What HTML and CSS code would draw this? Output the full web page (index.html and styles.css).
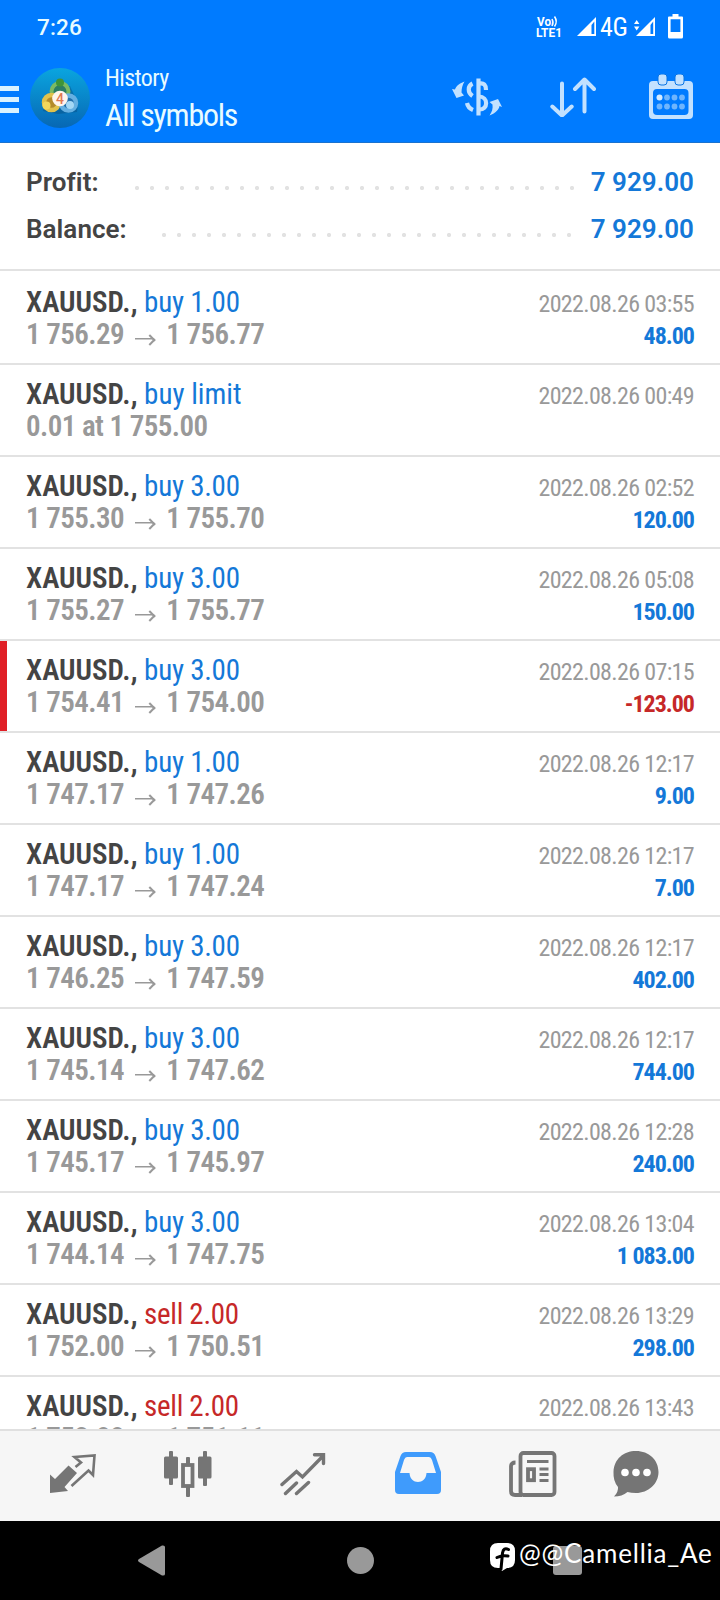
FILE: index.html
```html
<!DOCTYPE html>
<html lang="en">
<head>
<meta charset="utf-8">
<title>History</title>
<link rel="stylesheet" href="styles.css">
</head>
<body>
<div class="screen">
  <header class="top">
    <div class="status">
      <span class="time">7:26</span>
      <div class="status-icons">
        <svg class="volte" width="28" height="26" viewBox="0 0 28 26">
          <text x="1" y="11" textLength="14" lengthAdjust="spacingAndGlyphs" class="vo-text">Vo</text>
          <path d="M16 4q2 3.500 0 7M18.500 1.500q3.500 5 0 10" fill="none" stroke="#fff" stroke-width="1.500"/>
          <text x="0" y="22" textLength="26" lengthAdjust="spacingAndGlyphs" class="vo-text">LTE1</text>
        </svg>
        <svg class="sig1" width="20" height="20" viewBox="0 0 20 20"><path d="M0 19 19 0V19z" fill="#fff"/><path d="M14.500 8 17.300 4.500V17H14.500z" fill="#007bff"/></svg>
        <span class="net">4G</span>
        <svg class="sig2" width="22" height="20" viewBox="0 0 22 20"><path d="M0 7 2.700 3 5.400 7zM0 9.500 2.700 13.500 5.400 9.500zM2 19 21 0V19z" fill="#fff"/><path d="M16.500 8 19.200 4.500V17H16.500z" fill="#007bff"/></svg>
        <svg class="batt" width="15" height="25" viewBox="0 0 15 25"><path d="M4.500 0h6v2.500H14a1 1 0 0 1 1 1V23a1.500 1.500 0 0 1-1.500 1.500h-12A1.500 1.500 0 0 1 0 23V3.500a1 1 0 0 1 1-1h3.500zM2.600 5.200V18h9.800V5.200z" fill="#fff" fill-rule="evenodd"/></svg>
      </div>
    </div>
    <div class="appbar">
      <div class="menu"><i></i><i></i><i></i></div>
      <svg class="logo" width="60" height="60" viewBox="0 0 60 60">
        <defs>
          <linearGradient id="lg" x1="0" y1="0" x2="0" y2="1"><stop offset="0" stop-color="#0aa5df"/><stop offset="1" stop-color="#0767b4"/></linearGradient>
          <linearGradient id="gr" x1="0" y1="0" x2="0" y2="1"><stop offset="0" stop-color="#6db54c"/><stop offset="1" stop-color="#a5cf92"/></linearGradient>
        </defs>
        <circle cx="30" cy="30" r="30" fill="url(#lg)"/>
        <path d="M13 43 28 46 47 44 48 36 40 18 22 18z" fill="#07406c" opacity=".35"/>
        <circle cx="30" cy="23.500" r="8.500" fill="#2d7e62" stroke="#7cba62" stroke-width="4"/>
        <circle cx="21.500" cy="34.500" r="7.500" fill="#b48b2a" stroke="#e1c24b" stroke-width="4.500"/>
        <circle cx="38.500" cy="35" r="7.500" fill="#2370ac" stroke="#65b0e2" stroke-width="4.500"/>
        <circle cx="30" cy="14.500" r="4" fill="#3f9438"/><circle cx="16.500" cy="37.500" r="4" fill="#f2d75c"/><circle cx="40" cy="37" r="4" fill="#a5d8f5"/>
        <circle cx="30" cy="30.500" r="7.800" fill="#fff5ec"/>
        <text x="30" y="35.500" text-anchor="middle" class="logo-num">4</text>
      </svg>
      <div class="titles"><span class="t1">History</span><span class="t2">All symbols</span></div>
      <div class="actions">
        <svg class="act-currency" width="50" height="40" viewBox="0 0 50 40" fill="none" stroke="#c2e1ff" stroke-width="4.200">
          <path d="M26.500 1.500V38.500"/>
          <path d="M27 6.500C32 5.500 34 8 34 13M27 19.500C36.500 19.500 36.500 33 27 32.500M20.500 6.500C15.500 9 15.500 15.500 20.500 19M15 26Q16 31 21 33"/>
          <path d="M12.500 4.500C8 6 4 9 3 12.500L0 12 4.500 21 12 18.500 9.500 15.500C9.500 11 10.500 8 12.500 4.500zM37.500 38.500C44 36 47 32 47.500 29L50 30 46 22 37.500 25 40.500 27.500C41 31.500 40 35 37.500 38.500z" fill="#c2e1ff" stroke="none"/>
        </svg>
        <svg class="act-sort" width="46" height="40" viewBox="0 0 46 40" fill="none" stroke="#c2e1ff" stroke-width="4" stroke-linecap="round" stroke-linejoin="round"><path d="M12 6.500V37.500M2.300 29.500 12 38.500 21.700 29.500M34.500 34.500V3M25 12 34.500 2.500 44 12"/></svg>
        <svg width="44" height="46" viewBox="0 0 44 46">
          <path d="M4 7H40a4 4 0 0 1 4 4V41a4 4 0 0 1-4 4H4a4 4 0 0 1-4-4V11a4 4 0 0 1 4-4zM8 15a4 4 0 0 0-4 4V37a4 4 0 0 0 4 4H35.500a4 4 0 0 0 4-4V19a4 4 0 0 0-4-4z" fill="#c2e1ff" fill-rule="evenodd"/>
          <rect x="9" y="0" width="9" height="11" rx="3" fill="#c2e1ff" stroke="#0874e4"/><rect x="26" y="0" width="9" height="11" rx="3" fill="#c2e1ff" stroke="#0874e4"/>
          <g fill="#6fb5fd"><circle cx="10.500" cy="23.500" r="3" fill="#d5ebff"/><circle cx="18" cy="23.500" r="2.900"/><circle cx="25.500" cy="23.500" r="2.900"/><circle cx="33" cy="23.500" r="2.900"/><circle cx="10.500" cy="32.500" r="2.900"/><circle cx="18" cy="32.500" r="2.900"/><circle cx="25.500" cy="32.500" r="2.900"/><circle cx="33" cy="32.500" r="2.900"/></g>
        </svg>
      </div>
    </div>
  </header>

  <section class="summary">
    <div class="sum"><span class="label">Profit:</span><span class="dots dots-profit"></span><span class="value">7 929.00</span></div>
    <div class="sum"><span class="label">Balance:</span><span class="dots dots-balance"></span><span class="value">7 929.00</span></div>
  </section>

  <main class="list">
    <article class="row first"><div class="l"><p><b>XAUUSD.,</b> <em>buy 1.00</em></p><p class="px">1 756.29 <i class="arr"></i> 1 756.77</p></div><div class="r"><p>2022.08.26 03:55</p><p class="pl">48.00</p></div></article>
    <article class="row"><div class="l"><p><b>XAUUSD.,</b> <em class="limit">buy limit</em></p><p class="px">0.01 at 1 755.00</p></div><div class="r"><p>2022.08.26 00:49</p></div></article>
    <article class="row"><div class="l"><p><b>XAUUSD.,</b> <em>buy 3.00</em></p><p class="px">1 755.30 <i class="arr"></i> 1 755.70</p></div><div class="r"><p>2022.08.26 02:52</p><p class="pl">120.00</p></div></article>
    <article class="row"><div class="l"><p><b>XAUUSD.,</b> <em>buy 3.00</em></p><p class="px">1 755.27 <i class="arr"></i> 1 755.77</p></div><div class="r"><p>2022.08.26 05:08</p><p class="pl">150.00</p></div></article>
    <article class="row stopped"><div class="l"><p><b>XAUUSD.,</b> <em>buy 3.00</em></p><p class="px">1 754.41 <i class="arr"></i> 1 754.00</p></div><div class="r"><p>2022.08.26 07:15</p><p class="pl loss">-123.00</p></div></article>
    <article class="row"><div class="l"><p><b>XAUUSD.,</b> <em>buy 1.00</em></p><p class="px">1 747.17 <i class="arr"></i> 1 747.26</p></div><div class="r"><p>2022.08.26 12:17</p><p class="pl">9.00</p></div></article>
    <article class="row"><div class="l"><p><b>XAUUSD.,</b> <em>buy 1.00</em></p><p class="px">1 747.17 <i class="arr"></i> 1 747.24</p></div><div class="r"><p>2022.08.26 12:17</p><p class="pl">7.00</p></div></article>
    <article class="row"><div class="l"><p><b>XAUUSD.,</b> <em>buy 3.00</em></p><p class="px">1 746.25 <i class="arr"></i> 1 747.59</p></div><div class="r"><p>2022.08.26 12:17</p><p class="pl">402.00</p></div></article>
    <article class="row"><div class="l"><p><b>XAUUSD.,</b> <em>buy 3.00</em></p><p class="px">1 745.14 <i class="arr"></i> 1 747.62</p></div><div class="r"><p>2022.08.26 12:17</p><p class="pl">744.00</p></div></article>
    <article class="row"><div class="l"><p><b>XAUUSD.,</b> <em>buy 3.00</em></p><p class="px">1 745.17 <i class="arr"></i> 1 745.97</p></div><div class="r"><p>2022.08.26 12:28</p><p class="pl">240.00</p></div></article>
    <article class="row"><div class="l"><p><b>XAUUSD.,</b> <em>buy 3.00</em></p><p class="px">1 744.14 <i class="arr"></i> 1 747.75</p></div><div class="r"><p>2022.08.26 13:04</p><p class="pl">1 083.00</p></div></article>
    <article class="row"><div class="l"><p><b>XAUUSD.,</b> <em class="sell">sell 2.00</em></p><p class="px">1 752.00 <i class="arr"></i> 1 750.51</p></div><div class="r"><p>2022.08.26 13:29</p><p class="pl">298.00</p></div></article>
    <article class="row"><div class="l"><p><b>XAUUSD.,</b> <em class="sell">sell 2.00</em></p><p class="px">1 752.88 <i class="arr"></i> 1 751.11</p></div><div class="r"><p>2022.08.26 13:43</p></div></article>
  </main>

  <nav class="tabs">
    <svg width="46" height="40" viewBox="0 0 46 40"><path d="M18.500 11.500 27 19 14.500 33 18 37 0 39V20.500L5 25z" fill="#757575"/><path d="M25.500 13 31 8.500 24.500 3 44.500 1.500 43 21 38.500 16.500 21.500 32" fill="none" stroke="#757575" stroke-width="2.600"/></svg>
    <svg width="48" height="46" viewBox="0 0 48 46" fill="#757575"><rect x="5" y="0" width="4" height="34" rx="1"/><rect x="0" y="5.500" width="14" height="22" rx="1.500"/><rect x="39" y="0" width="4" height="35" rx="1"/><rect x="34" y="5.500" width="13.500" height="22" rx="1.500"/><rect x="22" y="6" width="4" height="40" rx="1"/><rect x="19" y="14" width="9.500" height="21" fill="#f6f6f6" stroke="#757575" stroke-width="3.800"/></svg>
    <svg width="46" height="44" viewBox="0 0 46 44" fill="none" stroke="#757575" stroke-width="3.400" stroke-linecap="round"><path d="M2 32.500 16.500 19.500 22.500 25 43 4M34.500 2.800H43.500V11.500M5.500 41.500 16.500 31M16.500 41.500 28.500 30.500"/></svg>
    <svg width="46" height="44" viewBox="0 0 46 44"><path d="M11 0H35q4 0 5.500 4L46 20V38a4 4 0 0 1-4 4H4a4 4 0 0 1-4-4V20L5.500 4Q7 0 11 0zM12 5Q10 5 9 8L5 21H14.500C15 33 31 33 31.500 21H41L37 8Q36 5 34 5z" fill="#3f9bfc" fill-rule="evenodd"/></svg>
    <svg width="48" height="46" viewBox="0 0 48 46" fill="none" stroke="#757575" stroke-width="3.800"><path d="M6.500 11.500Q2 11.500 2 15V40q0 4 4 4H13"/><rect x="11.500" y="2" width="34" height="42" rx="3"/><path d="M18 10.500H39.500M30.500 18H39.500M30.500 23.500H39.500M30.500 29.500H39.500" stroke-width="3.200"/><rect x="19" y="18.200" width="6" height="11"/></svg>
    <svg width="46" height="46" viewBox="0 0 46 46"><path d="M23 0C36 0 45.500 9 45.500 21S35 42 23 42Q18 42 14.500 41 9 45.500 1 45.500 5.500 41 5 36 0 30 .5 21C1 8 10.500 0 23 0z" fill="#757575"/><g fill="#fff"><circle cx="12" cy="21.500" r="3.800"/><circle cx="23" cy="21.500" r="3.800"/><circle cx="34" cy="21.500" r="3.800"/></g></svg>
  </nav>

  <footer class="sys">
    <svg class="back" width="27" height="31" viewBox="0 0 27 31"><path d="M1 14 24 .5Q27 0 27 2V29Q27 31 24 30.500L1 17Q-1 15.500 1 14z" fill="#999"/></svg>
    <i class="home"></i>
    <i class="recent"></i>
    <div class="mark">
      <svg width="25" height="28" viewBox="0 0 25 28"><path d="M8 0H17Q25 0 25 8V17Q25 25 17 25L12 28 10 25H8Q0 25 0 17V8Q0 0 8 0z" fill="#fff"/><path d="M18.500 6.500Q13.500 4 12.500 10L11 26M7 14.500Q12 12 18 13" fill="none" stroke="#000" stroke-width="3" stroke-linecap="round"/></svg>
      <span>@@Camellia_Ae</span>
    </div>
  </footer>
</div>
</body>
</html>
```
FILE: styles.css
```css
* { box-sizing: border-box; }
body { margin: 0; background: #fff; font-family: Roboto, "Liberation Sans", sans-serif; }
p { margin: 0; }
.screen { width: 720px; height: 1600px; display: flex; flex-direction: column; overflow: hidden; }

.top { height: 143px; background: #007bff; border-bottom: 1px solid #1a72cf; color: #e8fbff; flex: none; }
.status { height: 56px; display: flex; justify-content: space-between; padding: 0 37px; }
.time { font-size: 22.500px; font-weight: 500; line-height: 54px; letter-spacing: .2px; }
.status-icons { display: flex; align-items: flex-start; color: #fff; }
.volte { margin: 15px 13px 0 0; }
.vo-text { font: 700 12px Roboto, sans-serif; fill: #fff; }
.sig1 { margin-top: 17px; }
.net { width: 27px; font-size: 26px; line-height: 54px; font-stretch: 75%; font-weight: 450; letter-spacing: -.3px; margin: 0 7px 0 3px; }
.sig2 { margin-top: 17px; }
.batt { margin: 14px 0 0 12px; }

.appbar { height: 86px; display: flex; padding-right: 27px; }
.menu { width: 19px; display: flex; flex-direction: column; gap: 6px; padding-top: 30px; }
.menu i { height: 5px; background: #d9f2ff; flex: none; }
.logo { margin: 12px 0 0 11px; }
.logo-num { font: 500 14px Roboto, sans-serif; fill: #e07a52; }
.titles { flex: 1; display: flex; flex-direction: column; align-items: flex-start; padding: 7px 0 0 15px; font-stretch: 75%; font-weight: 450; white-space: nowrap; }
.t1 { font-size: 24px; line-height: 30px; letter-spacing: -.6px; }
.t2 { font-size: 32px; line-height: 44px; letter-spacing: -1.300px; }
.actions { display: flex; align-items: flex-start; padding-top: 18px; }
.act-currency { margin: 3px 48px 0 0; }
.act-sort { margin: 3px 53px 0 0; }

.summary { height: 128px; flex: none; padding: 15px 26px 0; border-bottom: 2px solid #e2e2e2; }
.sum { height: 47px; display: flex; line-height: 49px; font-size: 26px; font-weight: 650; color: #444; }
.label { letter-spacing: .05px; }
.value { color: #1478d8; letter-spacing: .05px; }
.dots { flex: 1; height: 6px; margin-top: 27px; background: radial-gradient(circle at 3px 3px, #e2e2e2 1.8px, transparent 2.4px) 0 0 / 15px 6px repeat-x; }
.dots-profit { margin-left: 35px; margin-right: 12px; }
.dots-balance { margin-left: 34px; margin-right: 14px; }

.list { flex: 1; min-height: 0; overflow: hidden; }
.row { height: 92px; display: flex; justify-content: space-between; padding: 13px 26px 0; border-bottom: 2px solid #e2e2e2; font-stretch: 75%; white-space: nowrap; }
.row.first { height: 94px; padding-top: 15px; }
.stopped { box-shadow: inset 7px 0 #e01f26; }
.l p { font-size: 29px; line-height: 32px; color: #444; }
.l b { font-weight: 600; }
.l em { font-style: normal; color: #1478d8; letter-spacing: -.25px; }
.l .limit { letter-spacing: 0; }
.l .sell { color: #c62828; letter-spacing: -.3px; }
.l .px { color: #999; font-weight: 600; letter-spacing: -.55px; }
.arr { display: inline-block; width: 20px; height: 9px; margin: 0 5px; background: linear-gradient(#999, #999) 0 4px / 19px 1.500px no-repeat; position: relative; top: -1px; }
.arr::after { content: ""; position: absolute; right: 1px; top: 1.500px; width: 6px; height: 6px; border: solid #999; border-width: 2px 2px 0 0; transform: rotate(45deg); }
.r { text-align: right; color: #999; font-size: 24px; line-height: 32px; padding-top: 2px; letter-spacing: -.65px; }
.r .pl { color: #1478d8; font-weight: 700; letter-spacing: -1px; }
.r .loss { color: #c62828; }

.tabs { height: 92px; flex: none; background: #f6f6f6; border-top: 2px solid #e0e0e0; display: grid; grid-template-columns: repeat(5, 115px) 92px; padding: 0 0 4px 15px; align-items: center; justify-items: center; }

.sys { height: 79px; flex: none; background: #000; display: flex; align-items: flex-start; position: relative; padding-left: 138px; }
.back { margin-top: 24px; }
.home { width: 27px; height: 27px; border-radius: 50%; background: #999; margin: 26px 0 0 182px; }
.recent { width: 29px; height: 29px; border-radius: 3px; background: #999; margin: 25px 0 0 179px; }
.mark { position: absolute; left: 490px; top: 22px; display: flex; gap: 4px; color: #fff; font: 26px/26px Lato, sans-serif; letter-spacing: .8px; }
.mark span { margin-top: -3px; }
```
